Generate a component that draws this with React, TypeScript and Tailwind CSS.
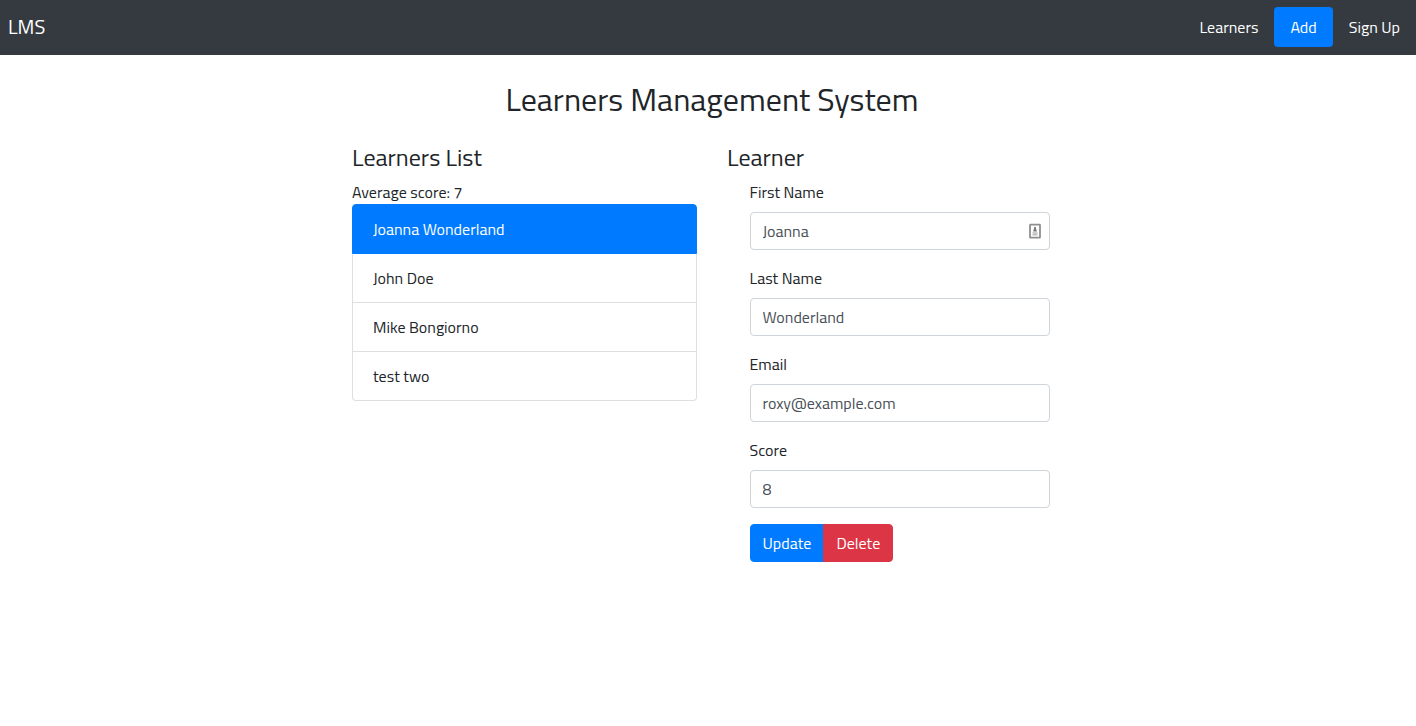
import { useState } from "react";

const learners = ["Joanna Wonderland", "John Doe", "Mike Bongiorno", "test two"];

const fields = [
  { id: "firstName", label: "First Name", value: "Joanna", badge: true },
  { id: "lastName", label: "Last Name", value: "Wonderland", badge: false },
  { id: "email", label: "Email", value: "roxy@example.com", badge: false },
  { id: "score", label: "Score", value: "8", badge: false },
];

function ContactIcon() {
  return (
    <svg
      className="pointer-events-none absolute top-[11px] right-2 h-4 w-3.5"
      viewBox="0 0 14 16"
      fill="none"
      aria-hidden="true"
    >
      <rect x="2" y="1.7" width="10" height="13" rx="0.4" stroke="#8f8f8f" strokeWidth="1.8" />
      <circle cx="7" cy="4.8" r="1.1" fill="#8a8a8a" />
      <path d="M6.2 5h1.6l1.2 3.6H5z" fill="#7a7a7a" />
      <path d="M4.5 10h5M4.5 11.8h5" stroke="#bdbdbd" strokeWidth="1.4" />
    </svg>
  );
}

export default function App() {
  const [selected, setSelected] = useState(0);

  return (
    <div className="min-h-screen bg-white font-['Titillium_Web','Roboto',sans-serif] text-base text-[#212529]">
      <nav className="flex items-center justify-between bg-[#343a40] pt-[7px] pb-2 pl-2 text-white">
        <a href="#home" className="text-xl leading-8">
          LMS
        </a>
        <div className="flex font-medium leading-6">
          <a href="#learners" className="px-4 py-2">
            Learners
          </a>
          <a href="#add" className="rounded bg-[#007bff] px-4 py-2">
            Add
          </a>
          <a href="#signup" className="px-4 py-2">
            Sign Up
          </a>
        </div>
      </nav>

      <main className="pt-6 pl-2">
        <div className="mx-auto max-w-[750px]">
          <h1 className="mb-6 text-center text-[32px] leading-10">Learners Management System</h1>
          <div className="grid grid-cols-2">
            <section className="px-[15px]">
              <h2 className="mb-[9px] text-2xl leading-7">Learners List</h2>
              <p className="leading-6">Average score: 7</p>
              <ul>
                {learners.map((name, i) => (
                  <li key={name} className="group">
                    <button
                      type="button"
                      onClick={() => setSelected(i)}
                      className={
                        "block w-full cursor-pointer border-x border-b px-5 py-3 text-left leading-6 group-first:rounded-t group-first:border-t group-last:rounded-b " +
                        (i === selected
                          ? "border-[#007bff] bg-[#007bff] font-medium text-white"
                          : "border-[#dfdfdf] bg-white")
                      }
                    >
                      {name}
                    </button>
                  </li>
                ))}
              </ul>
            </section>

            <section className="px-[15px]">
              <h2 className="mb-[9px] text-2xl leading-7">Learner</h2>
              <form className="mx-auto max-w-[300px]" onSubmit={(e) => e.preventDefault()}>
                {fields.map((f) => (
                  <div key={f.id} className="mb-4">
                    <label htmlFor={f.id} className="mb-2 block leading-6">
                      {f.label}
                    </label>
                    <div className="relative">
                      <input
                        id={f.id}
                        type="text"
                        defaultValue={f.value}
                        className="block h-[38px] w-full rounded border border-[#ced4da] bg-white px-3 leading-6 text-[#495057]"
                      />
                      {f.badge && <ContactIcon />}
                    </div>
                  </div>
                ))}
                <div className="flex font-medium leading-6 text-white">
                  <button
                    type="submit"
                    className="cursor-pointer rounded-l border border-[#007bff] bg-[#007bff] px-3 py-1.5"
                  >
                    Update
                  </button>
                  <button
                    type="button"
                    className="-ml-px cursor-pointer rounded-r border border-[#dc3545] bg-[#dc3545] px-3 py-1.5"
                  >
                    Delete
                  </button>
                </div>
              </form>
            </section>
          </div>
        </div>
      </main>
    </div>
  );
}
